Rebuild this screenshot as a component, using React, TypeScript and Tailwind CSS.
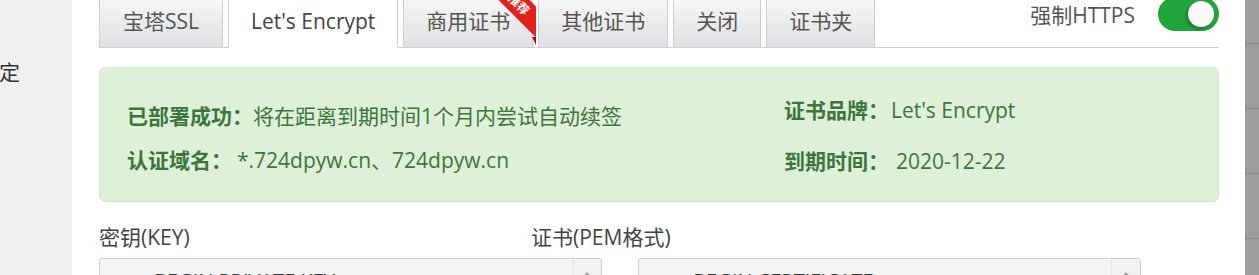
const tabs = [
  { label: '宝塔SSL', pad: 'px-[23px]' },
  { label: "Let's Encrypt", pad: 'px-[22px]' },
  { label: '商用证书', pad: 'px-[22px]' },
  { label: '其他证书', pad: 'px-[22px]' },
  { label: '关闭', pad: 'px-[22px]' },
  { label: '证书夹', pad: 'px-[22px]' },
];

function Ribbon() {
  return (
    <>
      <div className="pointer-events-none absolute left-[84px] top-0 h-[47px] w-[48px] overflow-hidden">
        <div className="absolute left-[-3px] top-[3px] flex h-[22px] w-[80px] rotate-45 items-center justify-center bg-[#e3211a] pr-[18px] text-[12px] leading-none font-bold text-white">
          推荐
        </div>
      </div>
      <div className="pointer-events-none absolute left-[128px] top-[40px] h-0 w-0 border-l-[4px] border-t-[8px] border-l-transparent border-t-[#9e110c]" />
    </>
  );
}

function Toggle() {
  return (
    <div className="mt-[1px] flex h-[34px] w-[61px] items-center justify-end rounded-full bg-[#20a53a] pr-[5px]">
      <div className="h-[26px] w-[26px] rounded-full bg-[#fafafa] shadow-[-2px_2px_3px_rgba(0,0,0,0.25)]" />
    </div>
  );
}

function CodeBox({ text }: { text: string }) {
  return (
    <div className="flex h-[60px] w-[503px] overflow-hidden rounded-[3px] border border-[#cfcfcf] bg-[#f5f5f5]">
      <div className="flex-1 pl-[22px] pt-[8px] text-[20px] leading-[28px] text-[#333]">{text}</div>
      <div className="flex w-[29px] justify-center border-l border-[#e6e6e6] bg-[#f1f1f1] pt-[13px]">
        <div className="h-0 w-0 border-x-[5px] border-b-[6px] border-x-transparent border-b-[#a3a3a3]" />
      </div>
    </div>
  );
}

export default function App() {
  return (
    <div className="flex h-[275px] w-[1259px] overflow-hidden bg-white font-['Open_Sans','Noto_Sans_CJK_SC',sans-serif] text-[21px] text-[#555]">
      {/* sidebar */}
      <aside className="w-[72px] shrink-0 bg-[#f0f0f0] pt-[58px]">
        <span className="-ml-px block leading-[28px] text-[#333]">定</span>
      </aside>

      <main className="min-w-0 flex-1 pl-[27px] pr-[26px]">
        {/* tabs */}
        <div className="-mt-[4px] flex h-[52px] border-b border-[#cdcbdc]">
          <div className="flex gap-[5px]">
            {tabs.map((t, i) => (
              <div
                key={t.label}
                className={
                  i === 1
                    ? `relative -mb-px flex items-center border border-[#cdcbdc] border-b-white bg-white whitespace-nowrap text-[#444] ${t.pad}`
                    : `relative -mb-px flex items-center border border-[#cdcbdc] bg-linear-to-b from-[#f8f8f8] to-[#e0e0e0] whitespace-nowrap ${t.pad}`
                }
              >
                {t.label}
                {i === 2 && <Ribbon />}
              </div>
            ))}
          </div>
          <div className="ml-auto flex items-start gap-[23px]">
            <span className="mt-[7px] leading-[24px]">强制HTTPS</span>
            <Toggle />
          </div>
        </div>

        {/* status */}
        <div className="mt-[19px] flex h-[135px] rounded-[6px] border border-[#d6e9c6] bg-[#dff0d8] leading-[28px] text-[#3c763d]">
          <div className="w-[684px] pl-[27px] pt-[34px]">
            <div>
              <span className="font-bold">已部署成功：</span>将在距离到期时间1个月内尝试自动续签
            </div>
            <div className="mt-[16px]">
              <span className="font-bold">认证域名：</span>
              <span className="ml-[5px]">*.724dpyw.cn、724dpyw.cn</span>
            </div>
          </div>
          <div className="pt-[28px]">
            <div>
              <span className="font-bold">证书品牌：</span>
              <span className="ml-[2px]">Let's Encrypt</span>
            </div>
            <div className="mt-[23px]">
              <span className="font-bold">到期时间：</span>
              <span className="ml-[7px]">2020-12-22</span>
            </div>
          </div>
        </div>

        {/* key / cert */}
        <div className="mt-[21px] flex leading-[28px] text-[#444]">
          <div className="w-[432px]">密钥(KEY)</div>
          <div>证书(PEM格式)</div>
        </div>
        <div className="mt-[7px] flex gap-[36px]">
          <CodeBox text="-----BEGIN PRIVATE KEY-----" />
          <CodeBox text="-----BEGIN CERTIFICATE-----" />
        </div>
      </main>

      {/* page scrollbar strip */}
      <div className="flex w-[14px] shrink-0 flex-col bg-[#9c9c9c]">
        <div className="h-[44px] shrink-0 border-b border-[#8a8a8a]" />
        <div className="h-[65px] shrink-0 border-b border-[#8a8a8a]" />
        <div className="h-[65px] shrink-0 border-b border-[#8a8a8a]" />
        <div className="h-[65px] shrink-0 border-b border-[#8a8a8a]" />
      </div>
    </div>
  );
}
